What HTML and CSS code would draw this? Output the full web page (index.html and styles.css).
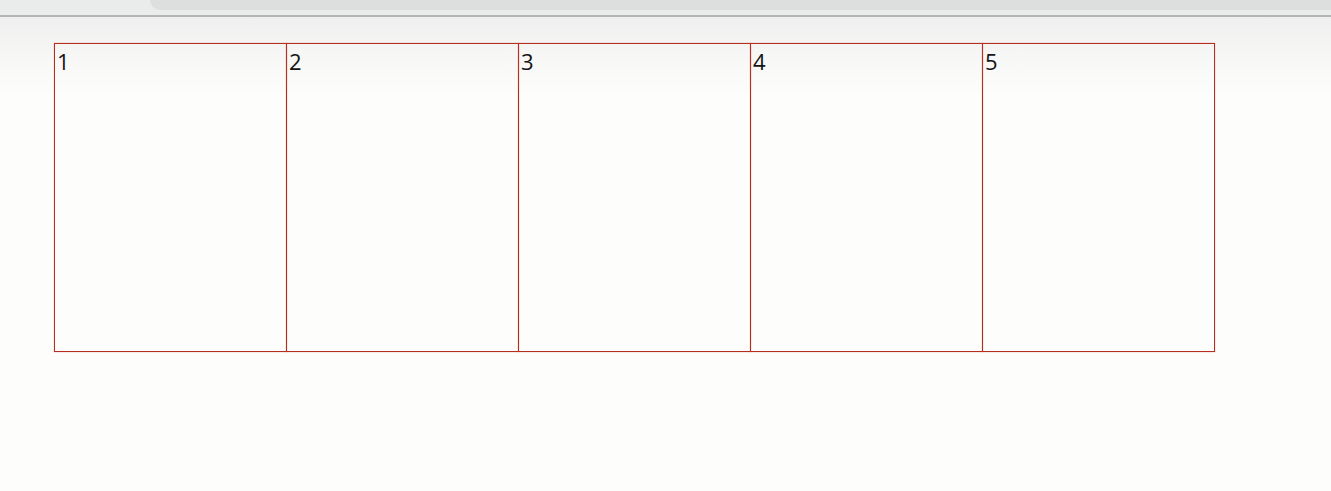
FILE: index.html
```html
<!DOCTYPE html>
<html>
<head>
<meta charset="utf-8">
<link rel="stylesheet" href="styles.css">
</head>
<body>
<div class="chrome">
  <div class="omnibox"></div>
</div>
<div class="page">
  <div class="row">
    <div class="cell">1</div>
    <div class="cell">2</div>
    <div class="cell">3</div>
    <div class="cell">4</div>
    <div class="cell">5</div>
  </div>
</div>
</body>
</html>
```
FILE: styles.css
```css
html, body {
  margin: 0;
  padding: 0;
  background: #fdfdfc;
  font-family: "Open Sans", "DejaVu Sans", sans-serif;
}
.chrome {
  height: 15px;
  background: #eaebeb;
  border-bottom: 2px solid #b4b5b5;
  display: flex;
  padding-left: 150px;
}
.omnibox {
  flex: 1;
  height: 10px;
  background: #dddfdf;
  border-bottom-left-radius: 12px;
}
.page {
  height: 474px;
  background: linear-gradient(to bottom, #efefef 0px, #f8f8f7 45px, #fdfdfc 80px, #fdfdfc 100%);
  padding: 26px 0 0 54px;
  box-sizing: border-box;
}
.row {
  display: flex;
}
.cell {
  width: 233px;
  height: 309px;
  box-sizing: border-box;
  border: 1px solid #b52e1f;
  box-shadow: 0 0 1px rgba(200, 70, 50, 0.6);
  padding: 6px 0 0 2px;
  font-size: 22px;
  line-height: 22px;
  color: #141414;
}
.cell + .cell {
  margin-left: -1px;
}
```
